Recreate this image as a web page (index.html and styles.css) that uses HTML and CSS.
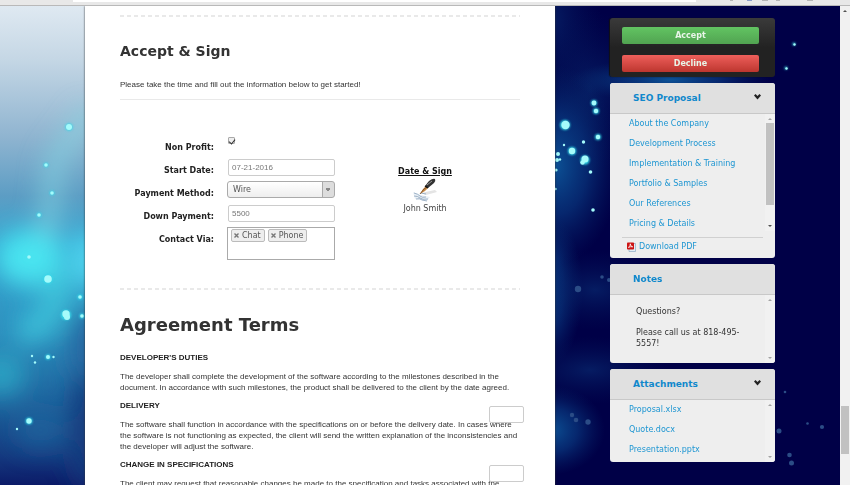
FILE: index.html
```html
<!DOCTYPE html>
<html lang="en">
<head>
  <meta charset="UTF-8">
  <title>SEO Proposal</title>
  <link rel="stylesheet" href="styles.css">
</head>
<body>
  <div class="toolbar">
    <div class="address"></div>
    <svg class="toolbar-icons" width="150" height="2" viewBox="0 0 150 2">
      <path d="M30 0h3M62 0h6M76 0h4M107 0h6" stroke="#b5b5b5" stroke-width="2"/>
      <path d="M47 0h5" stroke="#8b9cc8" stroke-width="2"/>
    </svg>
  </div>

  <div class="window">
    <div class="stage">
      <svg class="backdrop" viewBox="0 6 840 479" preserveAspectRatio="xMidYMid slice" aria-hidden="true">
        <defs>
          <linearGradient id="left" x1="0" y1="0" x2="0" y2="1">
            <stop offset="0" stop-color="#e2ebf3"/>
            <stop offset=".12" stop-color="#c5d7e5"/>
            <stop offset=".28" stop-color="#8fb4d0"/>
            <stop offset=".4" stop-color="#5c9dc4"/>
            <stop offset=".5" stop-color="#38a8d2"/>
            <stop offset=".68" stop-color="#2c8fbe"/>
            <stop offset=".84" stop-color="#1c5c98"/>
            <stop offset=".93" stop-color="#153a80"/>
            <stop offset="1" stop-color="#0a1664"/>
          </linearGradient>
          <radialGradient id="blue">
            <stop offset="0" stop-color="#0c5296"/>
            <stop offset=".5" stop-color="#0a4188" stop-opacity=".6"/>
            <stop offset="1" stop-color="#062a6c" stop-opacity="0"/>
          </radialGradient>
          <radialGradient id="dim">
            <stop offset="0" stop-color="#08286e" stop-opacity=".7"/>
            <stop offset="1" stop-color="#031458" stop-opacity="0"/>
          </radialGradient>
          <filter id="mist" x="-100%" y="-100%" width="300%" height="300%"><feGaussianBlur stdDeviation="12"/></filter>
          <filter id="glow" x="-100%" y="-100%" width="300%" height="300%"><feGaussianBlur stdDeviation="1"/></filter>
          <clipPath id="leftSide"><rect width="90" height="490"/></clipPath>
        </defs>
        <rect width="840" height="490" fill="#000047"/>
        <g clip-path="url(#leftSide)">
          <rect width="90" height="490" fill="url(#left)"/>
          <g filter="url(#mist)">
            <path d="M92 110L55 160L45 250" fill="none" stroke="#86d6e2" stroke-width="20" opacity=".65"/>
            <ellipse cx="30" cy="258" rx="34" ry="28" fill="#4ae4f0"/>
            <ellipse cx="88" cy="260" rx="14" ry="28" fill="#52dcf4"/>
            <path d="M60 270Q60 322 20 335" fill="none" stroke="#42cfe0" stroke-width="24" opacity=".8"/>
            <ellipse cx="28" cy="310" rx="12" ry="12" fill="#2f9fca"/>
            <ellipse cx="88" cy="350" rx="18" ry="40" fill="#2766a0"/>
            <ellipse cx="0" cy="375" rx="26" ry="22" fill="#30b4cd" opacity=".7"/>
            <ellipse cx="86" cy="430" rx="16" ry="60" fill="#173a7e"/>
            <ellipse cx="40" cy="430" rx="26" ry="20" fill="#1e6da4" opacity=".6"/>
          </g>
        </g>
        <ellipse cx="552" cy="20" rx="50" ry="80" fill="url(#dim)"/>
        <ellipse cx="590" cy="90" rx="60" ry="80" fill="url(#dim)"/>
        <ellipse cx="555" cy="165" rx="65" ry="100" fill="url(#blue)"/>
        <ellipse cx="545" cy="290" rx="38" ry="80" fill="url(#blue)"/>
        <ellipse cx="670" cy="80" rx="100" ry="22" fill="url(#blue)"/>
        <ellipse cx="595" cy="290" rx="70" ry="40" fill="url(#dim)"/>
        <ellipse cx="590" cy="370" rx="80" ry="34" fill="url(#dim)"/>
        <ellipse cx="550" cy="430" rx="55" ry="45" fill="url(#blue)"/>
        <g fill="#35d9ea" filter="url(#glow)">
          <circle cx="69" cy="127" r="3.500"/><circle cx="46" cy="165" r="2.300"/><circle cx="52" cy="193" r="2.300"/><circle cx="39" cy="215" r="2.300"/>
          <circle cx="48" cy="279" r="4.500"/><circle cx="80" cy="297" r="2.500"/><circle cx="66" cy="315" r="5"/><circle cx="82" cy="316" r="2.500"/>
          <circle cx="48" cy="357" r="2.500"/><circle cx="29" cy="421" r="3.300"/><circle cx="565" cy="125" r="5"/><circle cx="585" cy="160" r="4.500"/>
          <circle cx="594" cy="103" r="3"/><circle cx="596" cy="111" r="3"/><circle cx="572" cy="151" r="4"/><circle cx="598" cy="137" r="3"/>
          <circle cx="794" cy="44" r="1.500"/><circle cx="786" cy="68" r="1.500"/>
        </g>
        <g fill="#a5fbfb">
          <circle cx="69" cy="127" r="3"/><circle cx="46" cy="165" r="1.800"/><circle cx="52" cy="193" r="1.800"/><circle cx="39" cy="215" r="1.800"/>
          <circle cx="29" cy="257" r="1.800"/><circle cx="48" cy="279" r="3.800"/><circle cx="80" cy="297" r="1.800"/><circle cx="66" cy="314" r="3.700"/>
          <circle cx="67" cy="317" r="3"/><circle cx="82" cy="316" r="1.800"/><circle cx="48" cy="357" r="2"/><circle cx="53.500" cy="357" r="1.200"/>
          <circle cx="32" cy="356" r="1.200"/><circle cx="35" cy="362.500" r="1.200"/><circle cx="29" cy="421" r="2.700"/><circle cx="17" cy="429" r="1.200"/>
          <circle cx="594" cy="103" r="2.400"/><circle cx="596" cy="111" r="2.200"/><circle cx="565.500" cy="125" r="4.200"/><circle cx="598" cy="137" r="2.200"/>
          <circle cx="583.500" cy="142" r="1.700"/><circle cx="564" cy="145" r="1.200"/><circle cx="572" cy="151" r="3.200"/><circle cx="558" cy="154" r="2"/>
          <circle cx="557" cy="160" r="2"/><circle cx="560" cy="159.500" r="1.200"/><circle cx="585" cy="159" r="3.500"/><circle cx="582.500" cy="162.500" r="2.300"/>
          <circle cx="556" cy="170" r="1.600"/><circle cx="590.500" cy="172" r="1.800"/><circle cx="593" cy="210" r="1.800"/><circle cx="555.500" cy="189" r="1.200"/>
          <circle cx="794.500" cy="44.500" r="1.200"/><circle cx="786.500" cy="68.500" r="1.200"/>
        </g>
        <g fill="#2b4c86">
          <circle cx="578" cy="289" r="3.200"/><circle cx="602" cy="277" r="1.800"/><circle cx="609" cy="280" r="2"/><circle cx="572" cy="415" r="2.200"/>
          <circle cx="576" cy="420" r="2.300"/><circle cx="588" cy="422" r="2.700"/><circle cx="779" cy="431" r="2.500"/><circle cx="785" cy="392" r="1.300"/>
          <circle cx="807.500" cy="423.500" r="1.300"/><circle cx="822" cy="427" r="2.100"/><circle cx="789.500" cy="455" r="2.300"/><circle cx="791.500" cy="463" r="2.500"/>
        </g>
      </svg>

      <main class="paper">
        <hr class="dashed">
        <h2>Accept &amp; Sign</h2>
        <p class="intro">Please take the time and fill out the information below to get started!</p>

        <div class="accept">
          <form class="fields">
            <label for="nonprofit">Non Profit:</label>
            <input type="checkbox" id="nonprofit" checked>
            <label for="start">Start Date:</label>
            <input type="text" class="text" id="start" value="07-21-2016">
            <label for="method">Payment Method:</label>
            <select id="method">
              <option>Wire</option>
              <option>Check</option>
            </select>
            <label for="down">Down Payment:</label>
            <input type="text" class="text" id="down" value="5500">
            <span class="label">Contact Via:</span>
            <div class="chosen">
              <button type="button" class="tag"><svg width="5" height="5" viewBox="0 0 5 5"><path d="M.5 .5L4.500 4.500M4.500 .5L.5 4.500" stroke="#777" stroke-width="1.400"/></svg>Chat</button>
              <button type="button" class="tag"><svg width="5" height="5" viewBox="0 0 5 5"><path d="M.5 .5L4.500 4.500M4.500 .5L.5 4.500" stroke="#777" stroke-width="1.400"/></svg>Phone</button>
            </div>
          </form>
          <div class="signature">
            <a href="#sign">Date &amp; Sign</a>
            <svg width="26" height="24" viewBox="0 0 26 24" aria-hidden="true">
              <path d="M9 15L23 12L25 14L14 17Z" fill="#e4e4e4"/>
              <path d="M1 14L9 17L18 19L15 23L3 21Z" fill="#eaf0f5"/>
              <path d="M2 15Q6 16 8 18T14 19M2 18Q6 18 8 20T16 21M4 21Q8 20 10 22L15 23M9 15L14 16" fill="none" stroke="#8aa2bb" stroke-width=".8"/>
              <path d="M8 16L11 11L14 8L16 10L13 13Z" fill="#c98a45"/>
              <path d="M8 16L12 11L15 9" fill="none" stroke="#6b4423" stroke-width=".8"/>
              <path d="M13 8L17 3Q21 0 23 1Q24 3 22 5L16 10Z" fill="#333"/>
              <path d="M15 7L20 3" stroke="#999" stroke-width="1"/>
              <path d="M13 8L16 10" stroke="#111" stroke-width="1.500"/>
            </svg>
            <span>John Smith</span>
          </div>
        </div>

        <hr class="dashed">
        <h1>Agreement Terms</h1>
        <section class="term">
          <h3>DEVELOPER'S DUTIES</h3>
          <p>The developer shall complete the development of the software according to the milestones described in the document. In accordance with such milestones, the product shall be delivered to the client by the date agreed.</p>
        </section>
        <section class="term">
          <h3>DELIVERY</h3>
          <p>The software shall function in accordance with the specifications on or before the delivery date. In cases where the software is not functioning as expected, the client will send the written explanation of the inconsistencies and the developer will adjust the software.</p>
          <input type="text" class="text initials" aria-label="Initials">
        </section>
        <section class="term">
          <h3>CHANGE IN SPECIFICATIONS</h3>
          <p>The client may request that reasonable changes be made to the specification and tasks associated with the</p>
          <input type="text" class="text initials" aria-label="Initials">
        </section>
      </main>

      <aside class="sidebar">
        <div class="actions">
          <button type="button" class="accept-btn">Accept</button>
          <button type="button" class="decline-btn">Decline</button>
        </div>

        <section class="panel">
          <header>
            <h4>SEO Proposal</h4>
            <button type="button" class="toggle" aria-label="Toggle"><svg width="7" height="6" viewBox="0 0 7 6"><path d="M0 1.500L1.500 0L3.500 2L5.500 0L7 1.500L3.500 5.500Z" fill="#222"/></svg></button>
          </header>
          <div class="scroll tall">
            <ul class="links">
              <li><a href="#about">About the Company</a></li>
              <li><a href="#process">Development Process</a></li>
              <li><a href="#training">Implementation &amp; Training</a></li>
              <li><a href="#portfolio">Portfolio &amp; Samples</a></li>
              <li><a href="#references">Our References</a></li>
              <li><a href="#pricing">Pricing &amp; Details</a></li>
            </ul>
            <div class="bar"><i class="up"></i><i class="thumb"></i><i class="down on"></i></div>
          </div>
          <div class="download">
            <svg width="9" height="10" viewBox="0 0 9 10" aria-hidden="true">
              <path d="M2 1.500H8.500V9.500H2Z" fill="#e3edf5" stroke="#8eabc4" stroke-width=".7"/>
              <rect width="7" height="7" y=".5" rx=".8" fill="#cc1414"/>
              <path d="M1.500 5.500Q3.500 3.500 3.300 1.800Q3.300 4.500 5.700 4.800Q3.500 4.300 1.500 5.500" fill="none" stroke="#fff" stroke-width=".8"/>
            </svg>
            <a href="#pdf">Download PDF</a>
          </div>
        </section>

        <section class="panel">
          <header><h4>Notes</h4></header>
          <div class="scroll notes-scroll">
            <div class="notes">
              <p>Questions?</p>
              <p>Please call us at 818-495-5557!</p>
            </div>
            <div class="bar"><i class="up"></i><i class="down"></i></div>
          </div>
        </section>

        <section class="panel">
          <header>
            <h4>Attachments</h4>
            <button type="button" class="toggle" aria-label="Toggle"><svg width="7" height="6" viewBox="0 0 7 6"><path d="M0 1.500L1.500 0L3.500 2L5.500 0L7 1.500L3.500 5.500Z" fill="#222"/></svg></button>
          </header>
          <div class="scroll">
            <ul class="links">
              <li><a href="#xlsx">Proposal.xlsx</a></li>
              <li><a href="#docx">Quote.docx</a></li>
              <li><a href="#pptx">Presentation.pptx</a></li>
            </ul>
            <div class="bar"><i class="up"></i><i class="down"></i></div>
          </div>
        </section>
      </aside>
    </div>

    <div class="page-bar"><i class="up on"></i><i class="thumb"></i></div>
  </div>
</body>
</html>
```

FILE: styles.css
```css
* {
  box-sizing: border-box;
}

body {
  margin: 0;
  height: 100vh;
  display: flex;
  flex-direction: column;
  overflow: hidden;
  font-family: Verdana, "DejaVu Sans", sans-serif;
  font-size: 8px;
  line-height: 11px;
  color: #333;
}

h1, h2, h3, h4, p, ul {
  margin: 0;
  padding: 0;
}

button, input, select {
  margin: 0;
  padding: 0;
  font: inherit;
}

a {
  color: #1e96d2;
  text-decoration: none;
}

/* browser chrome */
.toolbar {
  flex: none;
  height: 6px;
  display: flex;
  justify-content: space-between;
  padding-left: 73px;
  background: #e8e8e8;
  border-bottom: 1px solid #b9b9b9;
}

.address {
  flex: 1;
  max-width: 623px;
  height: 2px;
  background: #fff;
}

.window {
  flex: 1;
  min-height: 0;
  display: flex;
}

.page-bar {
  width: 10px;
  background: #f1f1f1;
  display: flex;
  flex-direction: column;
  align-items: center;
  padding: 4px 1px 31px;
}

.page-bar .thumb {
  width: 8px;
  height: 48px;
  margin-top: auto;
  background: #c1c1c1;
}

.stage {
  flex: 1;
  position: relative;
  overflow: hidden;
  display: grid;
  grid-template-columns: minmax(0, 1fr) 165px;
  gap: 55px;
  padding: 0 65px 0 85px;
}

.backdrop {
  position: absolute;
  inset: 0;
  width: 100%;
  height: 100%;
}

/* proposal */
.paper {
  position: relative;
  padding: 9px 35px 0;
  background: #fff;
  box-shadow: 0 0 2px #333;
}

.dashed {
  height: 2px;
  margin: 0;
  border: 0;
  background: repeating-linear-gradient(90deg, #e9e9e9 0 4px, #fff 4px 7px);
}

h2 {
  margin-top: 24px;
  font-size: 14px;
  line-height: 20px;
}

.intro {
  padding: 18px 0 9px;
  border-bottom: 1px solid #e9e9e9;
  font-family: Arial, "Liberation Sans", sans-serif;
}

.accept {
  display: grid;
  grid-template-columns: 215px 180px;
  margin: 35px 0 28px;
}

.fields {
  display: grid;
  grid-template-columns: 94px 108px;
  grid-template-rows: repeat(4, 23px) 33px;
  column-gap: 13px;
  align-items: start;
}

.fields label, .fields .label {
  padding-top: 7px;
  text-align: right;
  font-weight: bold;
  color: #222;
}

.fields input[type="checkbox"] {
  appearance: none;
  display: flex;
  align-items: center;
  justify-content: center;
  width: 7px;
  height: 7px;
  margin: 2px 1px;
  border: 1px solid #aaa;
  border-radius: 1px;
  background: #eee;
}

.fields input[type="checkbox"]:checked::after {
  content: "";
  width: 3px;
  height: 5px;
  border: solid #333;
  border-width: 0 1px 1px 0;
  transform: rotate(40deg);
}

.text {
  height: 17px;
  margin: 1px 0 0 1px;
  padding: 0 3px;
  border: 1px solid #ccc;
  border-radius: 2px;
  background: #fff;
  font-family: Arial, "Liberation Sans", sans-serif;
  color: #777;
}

select {
  appearance: none;
  height: 17px;
  padding: 0 5px;
  border: 1px solid #aaa;
  border-radius: 3px;
  background:
    conic-gradient(from -35deg at 50% 100%, #888 70deg, transparent 0) right 4px top 6px / 4px 4px no-repeat,
    linear-gradient(90deg, #aaa 1px, #ddd 1px) right / 12px 100% no-repeat,
    linear-gradient(#fff, #eee);
  color: #555;
}

.chosen {
  height: 33px;
  display: flex;
  align-items: flex-start;
  gap: 3px;
  padding: 1px 3px;
  border: 1px solid #aaa;
}

.tag {
  height: 13px;
  display: flex;
  align-items: center;
  gap: 3px;
  padding: 0 3px 0 2px;
  border: 1px solid #bbb;
  border-radius: 2px;
  background: #eee;
  color: #555;
}

.signature {
  display: flex;
  flex-direction: column;
  align-items: center;
  padding-top: 31px;
  color: #444;
}

.signature svg {
  margin: 1px 0;
}

.signature a {
  font-weight: bold;
  color: #111;
  text-decoration: underline;
}

h1 {
  margin: 23px 0 15px;
  font-size: 18px;
  line-height: 24px;
}

.term {
  position: relative;
  margin-bottom: 7px;
  font-family: Arial, "Liberation Sans", sans-serif;
}

.term h3 {
  margin-bottom: 8px;
  font-size: 8px;
  color: #222;
}

.initials {
  position: absolute;
  top: 5px;
  right: -4px;
  width: 35px;
  background: transparent;
}

/* sidebar */
.sidebar {
  position: relative;
  display: flex;
  flex-direction: column;
  gap: 6px;
  padding-top: 12px;
}

.actions {
  display: flex;
  flex-direction: column;
  gap: 11px;
  height: 59px;
  padding: 9px 16px 0 12px;
  border-radius: 3px;
  background: linear-gradient(#3a3a3a, #222 50%);
  box-shadow: -1px 0 1px #111;
}

.actions button {
  height: 17px;
  border: 0;
  border-radius: 2px;
  font-weight: bold;
  color: #e8f5e8;
}

.actions .accept-btn {
  background: linear-gradient(#62c462, #51a351);
}

.actions .decline-btn {
  background: linear-gradient(#ee5f5b, #bd362f);
}

.panel {
  border-radius: 3px;
  background: #eee;
  overflow: hidden;
}

.panel header {
  display: flex;
  justify-content: space-between;
  align-items: center;
  height: 31px;
  padding: 1px 14px 0 23px;
  border-bottom: 1px solid #c8c8c8;
  background: #e0e0e0;
}

.panel h4 {
  font-size: 9px;
  color: #1088cc;
}

.toggle {
  display: flex;
  padding-bottom: 4px;
  border: 0;
  background: none;
}

.scroll {
  height: 62px;
  display: flex;
  justify-content: space-between;
}

.scroll.tall {
  height: 117px;
}

.scroll.notes-scroll {
  height: 68px;
}

.links {
  list-style: none;
  padding-left: 19px;
}

.links li {
  height: 20px;
  line-height: 20px;
}

.bar {
  flex: none;
  width: 10px;
  display: flex;
  flex-direction: column;
  align-items: center;
  padding: 4px 1px;
  background: #f1f1f1;
}

.bar .thumb {
  width: 8px;
  height: 82px;
  margin-top: 3px;
  background: #c1c1c1;
}

.up, .down {
  border: 2px solid transparent;
}

.up {
  border-top: 0;
  border-bottom-color: #a3a3a3;
}

.down {
  margin-top: auto;
  border-bottom: 0;
  border-top-color: #a3a3a3;
}

.up.on {
  border-bottom-color: #505050;
}

.down.on {
  border-top-color: #505050;
}

.download {
  display: flex;
  align-items: center;
  gap: 3px;
  height: 21px;
  margin: 6px 12px 0;
  padding: 0 5px 3px;
  border-top: 1px solid #d0d0d0;
}

.notes {
  padding: 11px 24px 0 26px;
}

.notes p {
  margin-bottom: 10px;
}
```
